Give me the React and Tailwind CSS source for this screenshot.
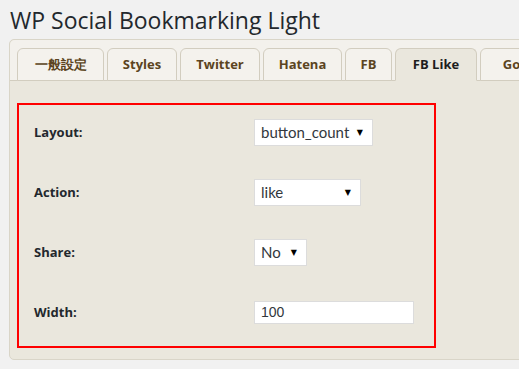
import React from "react";

const tabs = [
    { label: "一般設定", w: "w-[87px]" },
    { label: "Styles", w: "w-[70px]" },
    { label: "Twitter", w: "w-[80px]" },
    { label: "Hatena", w: "w-[79px]" },
    { label: "FB", w: "w-[47px]" },
    { label: "FB Like", w: "w-[82px]", active: true },
    { label: "Google", w: "w-[90px]" },
];

const Select = ({ value, w }) => (
    <div
        className={`${w} h-[27px] bg-white border border-[#dcdcdc] flex items-center justify-between pl-[6px] pr-[9px] text-[15px] text-[#32373c]`}
        style={{ fontFamily: "Lato, 'Open Sans', sans-serif" }}
    >
        <span>{value}</span>
        <span className="text-[8px] text-black" style={{ fontFamily: "'DejaVu Sans', sans-serif" }}>▼</span>
    </div>
);

const Row = ({ label, children }) => (
    <div className="flex items-center h-[27px]">
        <div className="w-[220px] text-[13px] font-bold text-[#23282d]">{label}</div>
        {children}
    </div>
);

const App = () => {
    return (
        <div
            className="w-[519px] h-[369px] bg-[#f1f1f1] overflow-hidden pl-[9px] pt-[4px]"
            style={{ fontFamily: "'Open Sans', sans-serif" }}
        >
            <h1 className="text-[23px] leading-[32px] text-[#23282d] pl-[1px] font-normal">
                WP Social Bookmarking Light
            </h1>
            <div className="mt-[3px] w-[560px] border border-[#d9d5c8] rounded-[5px] bg-[#eae7dd]">
                <div className="bg-[#f3f1ec] rounded-t-[5px] pt-[8px] pl-[7px] flex gap-[3px] border-b border-[#d2cdbf]">
                    {tabs.map((t) => (
                        <div
                            key={t.label}
                            className={`${t.w} shrink-0 h-[33px] -mb-px flex items-center justify-center rounded-t-[6px] border border-[#d2cdbf] text-[13px] font-bold ${
                                t.active
                                    ? "bg-[#eae7dd] border-b-[#eae7dd] text-[#1d1d1d]"
                                    : "bg-[#f4f2ed] text-[#5b4421]"
                            }`}
                        >
                            {t.label}
                        </div>
                    ))}
                </div>
                <div className="pt-[22px] pl-[7px] pb-[11px]">
                    <div className="w-[419px] border-2 border-[#ff0000] pt-[14px] pb-[20px] pl-[15px] flex flex-col gap-[33px]">
                        <Row label="Layout:">
                            <Select value="button_count" w="w-[119px]" />
                        </Row>
                        <Row label="Action:">
                            <Select value="like" w="w-[107px]" />
                        </Row>
                        <Row label="Share:">
                            <Select value="No" w="w-[53px]" />
                        </Row>
                        <Row label="Width:">
                            <div
                                className="w-[160px] h-[23px] bg-white border border-[#dcdcdc] flex items-center pl-[6px] text-[14px] text-[#32373c]"
                                style={{ fontFamily: "Arial, 'Liberation Sans', sans-serif" }}
                            >
                                100
                            </div>
                        </Row>
                    </div>
                </div>
            </div>
        </div>
    );
};

export default App;
